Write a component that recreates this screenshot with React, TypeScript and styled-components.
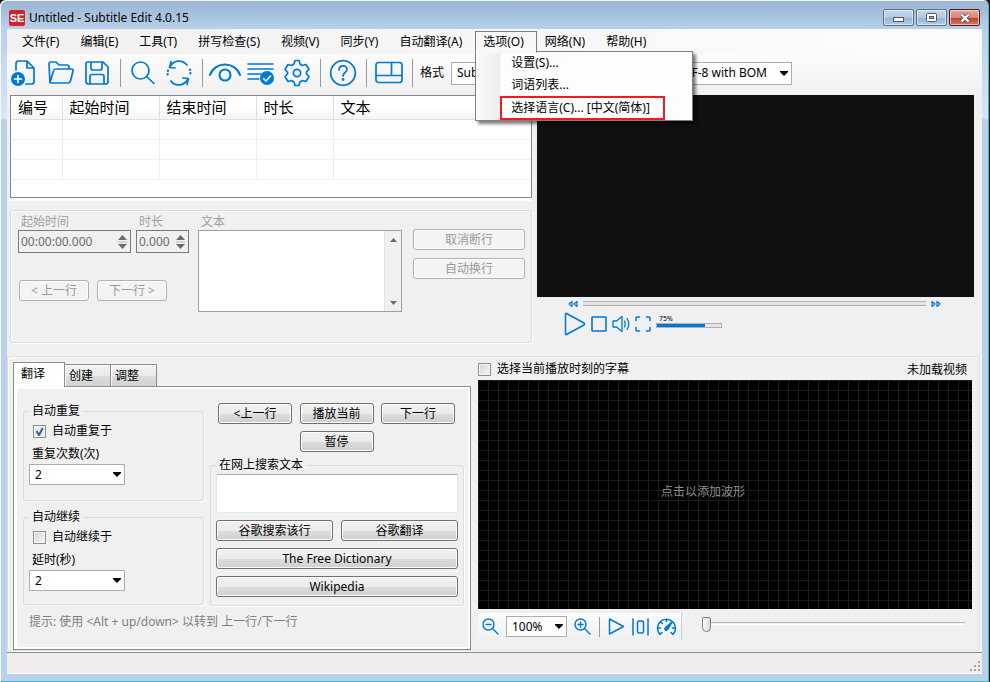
import React from "react";
import styled, { createGlobalStyle, css } from "styled-components";

const BLUE = "#0078d7";

const svgUrl = (body: string, w: number, h: number) =>
  `url("data:image/svg+xml,${encodeURIComponent(
    `<svg xmlns='http://www.w3.org/2000/svg' width='${w}' height='${h}'>${body}</svg>`
  )}")`;
const arrowDown = svgUrl("<path d='M0 0h8v1L4 5L0 1z' fill='#000'/>", 8, 5);
const tick = svgUrl(
  "<path d='M1.5 4l2.5 4L7.8 1' fill='none' stroke='#3c5aa5' stroke-width='2'/>",
  9,
  9
);

const GlobalStyle = createGlobalStyle`
  * { box-sizing: border-box; }
  body { margin: 0; background: #1a1a1a; }
  body, button, input, select, textarea {
    font-family: "Noto Sans", "Noto Sans CJK SC", sans-serif;
    font-size: 12px;
    line-height: 16px;
    color: #000;
  }
  button, fieldset, legend { margin: 0; padding: 0; }
`;

const Window = styled.div`
  display: flex;
  flex-direction: column;
  min-height: 100vh;
  padding: 0 7px 8px;
  border-right: 1px solid #111;
  border-radius: 6px 6px 0 0;
  background: linear-gradient(#98b4d2 0, #b8d0ea 29px, #d9e7f5 118px, #b9d1ea 120px);
  box-shadow: inset 1px 1px #f4f8fc, inset -1px -1px #35c0dc;
`;

const TitleBar = styled.header`
  display: flex;
  align-items: center;
  height: 29px;
  padding: 6px 2px 0 2px;
`;
const Logo = styled.span`
  width: 16px;
  height: 16px;
  border-radius: 2px;
  background: #d3222a;
  color: #fff;
  font: bold 11px/16px "Liberation Sans", sans-serif;
  text-align: center;
`;
const Title = styled.h1`
  flex: 1;
  margin: 0 0 0 4px;
  font-size: 12px;
  line-height: 16px;
  font-weight: 400;
`;
const Captions = styled.div`
  display: flex;
  gap: 2px;
`;
const CaptionButton = styled.button<{ $close?: boolean }>`
  display: grid;
  place-items: center;
  width: 31px;
  height: 17px;
  border: 1px solid #5c6e88;
  border-radius: 2px;
  background: linear-gradient(#c3d6ea 0, #b2c9e2 50%, #94b1d0 51%, #b4cde6 100%);
  box-shadow: inset 0 0 0 1px rgba(255, 255, 255, 0.5);
  ${(p) =>
    p.$close &&
    css`
      border-color: #4c1a1f;
      background: linear-gradient(#e8a79c 0, #d98678 50%, #bb3f2b 51%, #d67a63 100%);
    `}
`;

const Client = styled.main`
  flex: 1;
  display: flex;
  flex-direction: column;
  background: #f0f0f0;
`;

const MenuBar = styled.nav`
  display: flex;
  height: 25px;
  padding: 2px 7px 0;
  background: linear-gradient(90deg, #f1f1f1, #fcfcfc);
`;
const MenuSlot = styled.div`
  position: relative;
`;
const MenuButton = styled.button<{ $open?: boolean }>`
  height: 22px;
  padding: 0 12px 0 7px;
  border: 1px solid transparent;
  background: transparent;
  white-space: nowrap;
  ${(p) =>
    p.$open &&
    css`
      position: relative;
      z-index: 3;
      border-color: #808080;
      border-bottom-color: #f8f8f8;
      background: #f8f8f8;
    `}
`;
const DropDown = styled.div`
  position: absolute;
  z-index: 2;
  top: 20px;
  left: 0;
  width: 218px;
  padding: 0 27px 0 24px;
  border: 1px solid #808080;
  background: linear-gradient(90deg, #fbfbfb 0, #ededed 24px, #fdfdfd 25px);
  box-shadow: 3px 3px 3px rgba(0, 0, 0, 0.5);
`;
const DropItem = styled.button<{ $marked?: boolean }>`
  display: block;
  width: 100%;
  height: 22px;
  padding: 0 0 0 11px;
  border: 0;
  background: transparent;
  text-align: left;
  ${(p) =>
    p.$marked &&
    css`
      height: 24px;
      padding-left: 9px;
      border: 2px solid #ed1c24;
    `}
`;

const ToolBar = styled.div`
  display: flex;
  align-items: center;
  height: 41px;
  padding-bottom: 3px;
  background: linear-gradient(#fcfcfc, #f0f0f0);
`;
const ToolButton = styled.button`
  display: grid;
  place-items: center;
  flex: none;
  width: 36px;
  height: 32px;
  border: 0;
  background: transparent;
`;
const Separator = styled.i`
  flex: none;
  width: 1px;
  height: 28px;
  margin: 0 4px 0 5px;
  background: #9b9b9b;
`;
const ToolLabel = styled.label`
  margin: 0 7px 0 3px;
  white-space: nowrap;
`;
const Select = styled.select<{ $w: number }>`
  appearance: none;
  width: ${(p) => p.$w}px;
  height: 21px;
  padding: 0 16px 0 5px;
  border: 1px solid #abadb3;
  border-radius: 0;
  background: #fff ${arrowDown} no-repeat right 3px center;
`;
const ToolSelect = styled(Select)`
  height: 23px;
`;

const Upper = styled.section`
  display: grid;
  grid-template-columns: 522fr 437fr;
  gap: 5px;
  height: 261px;
  padding: 0 8px 0 3px;
`;
const Column = styled.div`
  display: flex;
  flex-direction: column;
  min-width: 0;
`;
const ListFrame = styled.div`
  height: 103px;
  margin-bottom: 12px;
  border: 1px solid #828790;
  background: #fff;
  box-shadow: 0 3px #fcfcfc;
`;
const ListTable = styled.table`
  width: 100%;
  table-layout: fixed;
  border-collapse: collapse;
  th,
  td {
    padding: 0 0 0 7px;
    border-right: 1px solid #ececec;
    border-bottom: 1px solid #f0f0f0;
  }
  th:last-child,
  td:last-child {
    border-right: 0;
  }
  th {
    height: 23px;
    font-size: 15px;
    line-height: 20px;
    font-weight: 400;
    text-align: left;
    border-color: #e0e0e0;
    background: linear-gradient(#fff 50%, #f3f4f5);
  }
  td {
    height: 20px;
  }
`;
const Col = styled.col<{ $w?: number }>`
  width: ${(p) => (p.$w ? `${p.$w}px` : "auto")};
`;

const frame = css`
  border: 1px solid #d5dfe5;
  border-radius: 3px;
  box-shadow: inset 1px 1px #fcfcfc, 1px 1px #fcfcfc;
`;
const EditGroup = styled.form`
  ${frame}
  display: grid;
  grid-template-columns: 169px 1fr 112px;
  column-gap: 11px;
  height: 133px;
  padding: 2px 6px 0 7px;
  color: #a0a0a0;
`;
const Field = styled.div`
  display: flex;
  flex-direction: column;
`;
const FieldLabel = styled.label`
  height: 17px;
  padding-left: 3px;
  line-height: 17px;
`;
const TimeRow = styled.div`
  display: flex;
  gap: 5px;
  margin-bottom: 27px;
`;
const Spinner = styled.div<{ $w: number }>`
  display: flex;
  align-items: center;
  width: ${(p) => p.$w}px;
  height: 23px;
  padding-right: 3px;
  border: 1px solid #7a7a7a;
`;
const SpinInput = styled.input`
  flex: 1;
  min-width: 0;
  padding: 0 0 0 2px;
  border: 0;
  background: transparent;
  color: #6d6d6d;
`;
const ButtonRow = styled.div`
  display: flex;
  gap: 8px;
  padding-left: 1px;
`;
const PushButton = styled.button<{ $w?: number }>`
  width: ${(p) => (p.$w ? `${p.$w}px` : "100%")};
  height: 21px;
  border: 1px solid #707070;
  border-radius: 3px;
  background: linear-gradient(#f2f2f2 0, #ebebeb 50%, #dddddd 51%, #cfcfcf 100%);
  box-shadow: inset 0 0 0 1px #fcfcfc;
  line-height: 19px;
  white-space: nowrap;
  &:disabled {
    border-color: #adb2b5;
    background: #f4f4f4;
    color: #9a9a9a;
  }
`;
const TextArea = styled.textarea`
  height: 82px;
  border: 1px solid #a5a5a5;
  padding: 2px;
  resize: none;
  background: #fff;
  outline: 0;
`;
const TextBoxFrame = styled.div`
  display: flex;
  height: 82px;
  border: 1px solid #a0a0a0;
  background: #fff;
`;
const BareText = styled(TextArea)`
  flex: 1;
  min-width: 0;
  height: 80px;
  border: 0;
`;
const ScrollTrack = styled.div`
  display: flex;
  flex-direction: column;
  align-items: center;
  justify-content: space-between;
  width: 17px;
  padding: 7px 0 6px;
  background: #f0f0f0;
  border-left: 1px solid #e3e3e3;
`;
const BreakButtons = styled.div`
  display: flex;
  flex-direction: column;
  gap: 8px;
  padding: 16px 0 0;
`;

const Video = styled.div`
  height: 202px;
  background: #111;
`;
const SeekRow = styled.div`
  display: flex;
  align-items: center;
  gap: 5px;
  height: 13px;
  padding: 0 33px 0 31px;
`;
const bar = css`
  appearance: none;
  margin: 0;
  &::-webkit-slider-thumb {
    appearance: none;
    width: 0;
    height: 0;
  }
`;
const SeekBar = styled.input`
  ${bar}
  flex: 1;
  min-width: 0;
  height: 5px;
  border-top: 1px solid #b5b5b5;
  border-bottom: 1px solid #adadad;
  background: #e4e4e4;
`;
const PlayerRow = styled.div`
  display: flex;
  align-items: center;
  gap: 5px;
  height: 28px;
  padding-left: 27px;
`;
const IconButton = styled.button`
  display: grid;
  place-items: center;
  flex: none;
  border: 0;
  background: transparent;
`;
const Volume = styled.label`
  display: flex;
  flex-direction: column;
  height: 20px;
  font-size: 7px;
  line-height: 9px;
  span {
    padding-left: 3px;
  }
`;
const VolumeBar = styled.input`
  ${bar}
  width: 66px;
  height: 5px;
  border: 1px solid #b0b0b0;
  background: linear-gradient(90deg, ${BLUE} 75%, #e6e6e6 75%);
`;

const Lower = styled.section`
  ${frame}
  flex: 1;
  display: grid;
  grid-template-columns: 458fr 494fr;
  gap: 7px;
  margin-right: 2px;
  padding: 5px 7px 0 5px;
`;
const TabStrip = styled.div`
  display: flex;
  align-items: flex-end;
  height: 24px;
`;
const Tab = styled.button<{ $active?: boolean }>`
  width: 46px;
  height: 22px;
  padding: 0 0 0 4px;
  border: 1px solid #8c8e94;
  border-bottom: 0;
  border-left-width: ${(p) => (p.$active ? 1 : 0)}px;
  background: linear-gradient(#f2f2f2 0, #ebebeb 50%, #dddddd 51%, #d3d3d3 100%);
  box-shadow: inset 1px 1px #fafafa;
  text-align: left;
  ${(p) =>
    p.$active &&
    css`
      position: relative;
      z-index: 1;
      width: 52px;
      height: 25px;
      margin-bottom: -1px;
      padding: 0 0 2px 7px;
      background: #fff;
    `}
`;
const Pane = styled.div`
  flex: 1;
  display: flex;
  flex-direction: column;
  border: 1px solid #8c8e94;
  background: #fff;
  padding: 2px 2px 2px 3px;
`;
const PaneBody = styled.div`
  flex: 1;
  padding: 14px 4px 0 6px;
  background: #f0f0f0;
`;
const PaneColumns = styled.div`
  display: grid;
  grid-template-columns: 181fr 254fr;
  gap: 6px;
`;
const Group = styled.fieldset`
  ${frame}
  box-shadow: 1px 1px #fcfcfc;
  min-width: 0;
  padding: 0 5px;
  legend {
    margin-left: 0;
    padding: 0 3px;
  }
`;
const OptionGroup = styled(Group)<{ $last?: boolean }>`
  height: ${(p) => (p.$last ? 96 : 98)}px;
  margin-bottom: 8px;
`;
const CheckRow = styled.label<{ $pad?: boolean }>`
  display: flex;
  align-items: center;
  gap: 6px;
  padding: ${(p) => (p.$pad ? "4px 0 0 4px" : "0")};
`;
const CheckBox = styled.input`
  appearance: none;
  width: 13px;
  height: 13px;
  margin: 0;
  border: 1px solid #8e8f8f;
  background: linear-gradient(135deg, #d0d4da, #f6f6f6);
  box-shadow: inset 0 0 0 1px #f4f4f4;
  &:checked {
    background: #e7ebf2 ${tick} no-repeat center;
  }
`;
const OptionLabel = styled.label`
  display: block;
  padding: 7px 0 2px 3px;
`;
const NavButtons = styled.div`
  display: grid;
  grid-template-columns: repeat(3, 74px);
  justify-content: space-between;
  row-gap: 7px;
  padding: 0 9px 5px 8px;
  > :last-child {
    grid-column: 2;
  }
`;
const SearchGroup = styled(Group)`
  height: 149px;
`;
const SearchText = styled(TextArea)`
  display: block;
  width: 100%;
  height: 39px;
  margin: 1px 0 7px;
  border-color: #abadb3 #e2e3ea #e3e9ef;
  border-radius: 2px;
`;
const SearchButtons = styled.div`
  display: grid;
  grid-template-columns: 1fr 1fr;
  gap: 7px 8px;
`;
const WideButton = styled(PushButton)`
  grid-column: 1 / -1;
`;
const Hint = styled.p`
  margin: 1px 0 0 6px;
  color: #808080;
`;

const WaveHead = styled.div`
  display: flex;
  justify-content: space-between;
  height: 18px;
  padding: 0 5px 4px 0;
`;
const Wave = styled.button`
  flex: 1;
  padding: 0 44px 6px 0;
  border: 0;
  color: #8c8c8c;
  background-color: #000;
  background-image: linear-gradient(#1b1b1b 1px, transparent 1px),
    linear-gradient(90deg, #1b1b1b 1px, transparent 1px);
  background-size: 10px 10px;
`;
const WaveFoot = styled.div`
  display: flex;
  align-items: flex-start;
  padding: 4px 7px 10px 0;
`;
const WaveTools = styled.div`
  display: flex;
  align-items: center;
  gap: 7px;
  width: 204px;
  height: 27px;
  padding: 0 4px;
  border-right: 1px solid #d0d0d0;
  background: linear-gradient(#fcfcfc, #f0f0f0);
`;
const WaveSeparator = styled(Separator)`
  height: 20px;
  margin: 0 1px;
`;
const Position = styled.input`
  appearance: none;
  flex: 1;
  min-width: 0;
  height: 16px;
  margin: 3px 0 0 20px;
  background: linear-gradient(#b5b5b5, #b5b5b5) 4px 6px / 100% 1px no-repeat,
    linear-gradient(#fdfdfd, #fdfdfd) 4px 8px / 100% 1px no-repeat;
  &::-webkit-slider-thumb {
    appearance: none;
    width: 9px;
    height: 15px;
    border: 1px solid #7c7c7c;
    border-radius: 2px 2px 5px 5px;
    background: linear-gradient(90deg, #fff, #d8d8d8);
  }
`;

const StatusBar = styled.footer`
  display: flex;
  align-items: flex-end;
  justify-content: flex-end;
  height: 22px;
  margin-top: 1px;
  padding: 0 2px 2px 0;
  border-top: 1px solid #8a8a8a;
  border-bottom: 1px solid #fdfdfd;
  background: #f1edec;
`;

type IconProps = { w: number; h: number; sw?: number; children: React.ReactNode };
const Icon = ({ w, h, sw = 1.7, children }: IconProps) => (
  <svg
    width={w}
    height={h}
    viewBox={`0 0 ${w} ${h}`}
    fill="none"
    stroke={BLUE}
    strokeWidth={sw}
    strokeLinecap="round"
    strokeLinejoin="round"
    aria-hidden="true"
  >
    {children}
  </svg>
);

const NewIcon = () => (
  <Icon w={28} h={28}>
    <path d="M5 11V4.500Q5 2 7.500 2H16L23 9V22.500Q23 25 20.500 25H15M16 2V9H23" />
    <circle cx="7" cy="20" r="7" fill={BLUE} stroke="none" />
    <path d="M3.500 20h7M7 16.500v7" stroke="#fff" />
  </Icon>
);
const OpenIcon = () => (
  <Icon w={28} h={26}>
    <path d="M3 22.500L2 4Q2 2 4 2H9L12 5H20Q22 5 22 7V9M3 22.500L6.500 11Q7 9 9 9H24.500Q26.500 9 26 11L23.500 21Q23 23 21 23H4Q3 23 3 22" />
  </Icon>
);
const SaveIcon = () => (
  <Icon w={26} h={26}>
    <path d="M4 2H19L24 7V21.500Q24 24 21.500 24H4.500Q2 24 2 21.500V4Q2 2 4 2ZM7 2V8Q7 10 9 10H16Q18 10 18 8V2M6 24V16.500Q6 14.500 8 14.500H18Q20 14.500 20 16.500V24" />
  </Icon>
);
const FindIcon = () => (
  <Icon w={26} h={26}>
    <circle cx="10.500" cy="10.500" r="8.500" />
    <path d="M17 17L24 23.500" />
  </Icon>
);
const ReplaceIcon = () => (
  <Icon w={28} h={28}>
    <path d="M5 8C8 1 17 0 22 6M6 2.500L4.500 8.500L10 9M23 20C19 27 10 28 6 22M18 19L23.500 19.500L22 25.500" />
    <path d="M25 10.500Q26 14 24.500 17M3 11.500Q2 15 3.500 18" strokeDasharray="0.500 3" strokeWidth="2.200" />
  </Icon>
);
const EyeIcon = () => (
  <Icon w={34} h={24} sw={2.1}>
    <path d="M2 14C7 0 27 0 32 14" />
    <circle cx="17" cy="14" r="5.500" />
  </Icon>
);
const ListCheckIcon = () => (
  <Icon w={28} h={26} sw={1.6}>
    <path d="M1 4H26M1 9H26M1 14H14M1 19H12" />
    <circle cx="20" cy="18" r="7" fill={BLUE} stroke="none" />
    <path d="M16.500 18.500L19 21L23.500 16" stroke="#fff" />
  </Icon>
);
const GearIcon = () => (
  <Icon w={28} h={28}>
    <path d="M11 5L12 1.500H16L17 5L19.500 6.500L23 5.500L26 10.500L23.500 13V15L26 17.500L23 22.500L19.500 21.500L17 23L16 26.500H12L11 23L8.500 21.500L5 22.500L2 17.500L4.500 15V13L2 10.500L5 5.500L8.500 6.500Z" />
    <circle cx="14" cy="14" r="3.600" />
  </Icon>
);
const HelpIcon = () => (
  <Icon w={28} h={28}>
    <circle cx="14" cy="14" r="12.300" />
    <path d="M10 11C10 5.500 18 5.500 18 10.500C18 13.500 14 13.500 14 17" />
    <circle cx="14" cy="20.500" r="0.600" />
  </Icon>
);
const LayoutIcon = () => (
  <Icon w={28} h={24}>
    <rect x="1" y="1.500" width="26" height="20" rx="2.500" />
    <path d="M1 14.500H27M16.500 1.500V14.500" />
  </Icon>
);
const SpinArrows = () => (
  <svg width="9" height="14" viewBox="0 0 9 14" fill="#6d6d6d" aria-hidden="true">
    <path d="M4.500 0L9 5H0ZM0 9H9L4.500 14Z" />
    <path d="M0 7H9" stroke="#bbb" />
  </svg>
);
const ZoomIcon = ({ plus }: { plus?: boolean }) => (
  <Icon w={17} h={17} sw={1.4}>
    <circle cx="6.500" cy="6.500" r="5.500" />
    <path d={plus ? "M10.500 10.500L16 16M4 6.500H9M6.500 4V9" : "M10.500 10.500L16 16M4 6.500H9"} />
  </Icon>
);

const Check = ({ text, pad, checked }: { text: string; pad?: boolean; checked?: boolean }) => (
  <CheckRow $pad={pad}>
    <CheckBox type="checkbox" defaultChecked={checked} />
    {text}
  </CheckRow>
);

const toolGroups: [string, () => React.JSX.Element][][] = [
  [["新建", NewIcon], ["打开", OpenIcon], ["保存", SaveIcon]],
  [["查找", FindIcon], ["替换", ReplaceIcon]],
  [["视觉同步", EyeIcon], ["拼写检查", ListCheckIcon], ["设置", GearIcon]],
  [["帮助", HelpIcon]],
  [["布局", LayoutIcon]],
];
const menus = [
  "文件(F)", "编辑(E)", "工具(T)", "拼写检查(S)", "视频(V)",
  "同步(Y)", "自动翻译(A)", "选项(O)", "网络(N)", "帮助(H)",
];

export default function App() {
  return (
    <Window>
      <GlobalStyle />
      <TitleBar>
        <Logo>SE</Logo>
        <Title>Untitled - Subtitle Edit 4.0.15</Title>
        <Captions>
          <CaptionButton aria-label="最小化">
            <svg width="11" height="9">
              <rect x="0.500" y="4.500" width="10" height="4" fill="#fff" stroke="#535666" />
            </svg>
          </CaptionButton>
          <CaptionButton aria-label="最大化">
            <svg width="11" height="9">
              <rect x="0.500" y="0.500" width="10" height="8" rx="1" fill="#fff" stroke="#535666" />
              <rect x="3.500" y="3.500" width="4" height="2" fill="#9ab5d3" stroke="#535666" />
            </svg>
          </CaptionButton>
          <CaptionButton $close aria-label="关闭">
            <svg width="12" height="10" fill="none">
              <path d="M2.500 1.500L9.500 8.500M9.500 1.500L2.500 8.500" stroke="#535666" strokeWidth="4" />
              <path d="M2.500 1.500L9.500 8.500M9.500 1.500L2.500 8.500" stroke="#fff" strokeWidth="2.200" />
            </svg>
          </CaptionButton>
        </Captions>
      </TitleBar>

      <Client>
        <MenuBar>
          {menus.map((name) => {
            const open = name === "选项(O)";
            return (
              <MenuSlot key={name}>
                <MenuButton $open={open}>{name}</MenuButton>
                {open && (
                  <DropDown>
                    <DropItem>设置(S)...</DropItem>
                    <DropItem>词语列表...</DropItem>
                    <DropItem $marked>选择语言(C)... [中文(简体)]</DropItem>
                  </DropDown>
                )}
              </MenuSlot>
            );
          })}
        </MenuBar>

        <ToolBar>
          {toolGroups.map((group, i) => (
            <React.Fragment key={i}>
              {group.map(([label, Glyph]) => (
                <ToolButton key={label} aria-label={label}>
                  <Glyph />
                </ToolButton>
              ))}
              <Separator />
            </React.Fragment>
          ))}
          <ToolLabel htmlFor="format">格式</ToolLabel>
          <ToolSelect id="format" $w={185}>
            <option>SubRip (.srt)</option>
          </ToolSelect>
          <ToolLabel htmlFor="encoding">编码</ToolLabel>
          <ToolSelect id="encoding" $w={122}>
            <option>UTF-8 with BOM</option>
          </ToolSelect>
        </ToolBar>

        <Upper>
          <Column>
            <ListFrame>
              <ListTable>
                <colgroup>
                  <Col $w={51} />
                  <Col $w={97} />
                  <Col $w={97} />
                  <Col $w={77} />
                  <Col />
                </colgroup>
                <thead>
                  <tr>
                    {["编号", "起始时间", "结束时间", "时长", "文本"].map((h) => (
                      <th key={h}>{h}</th>
                    ))}
                  </tr>
                </thead>
                <tbody>
                  {[0, 1, 2].map((r) => (
                    <tr key={r}>
                      {[0, 1, 2, 3, 4].map((c) => (
                        <td key={c} />
                      ))}
                    </tr>
                  ))}
                </tbody>
              </ListTable>
            </ListFrame>

            <EditGroup>
              <Field>
                <TimeRow>
                  <Field>
                    <FieldLabel htmlFor="start">起始时间</FieldLabel>
                    <Spinner $w={113}>
                      <SpinInput id="start" defaultValue="00:00:00.000" disabled />
                      <SpinArrows />
                    </Spinner>
                  </Field>
                  <Field>
                    <FieldLabel htmlFor="duration">时长</FieldLabel>
                    <Spinner $w={53}>
                      <SpinInput id="duration" defaultValue="0.000" disabled />
                      <SpinArrows />
                    </Spinner>
                  </Field>
                </TimeRow>
                <ButtonRow>
                  <PushButton $w={70} disabled>&lt; 上一行</PushButton>
                  <PushButton $w={70} disabled>下一行 &gt;</PushButton>
                </ButtonRow>
              </Field>
              <Field>
                <FieldLabel htmlFor="text">文本</FieldLabel>
                <TextBoxFrame>
                  <BareText id="text" disabled />
                  <ScrollTrack>
                    <svg width="7" height="4" fill="#6a6a6a"><path d="M0 4L3.500 0L7 4Z" /></svg>
                    <svg width="7" height="4" fill="#6a6a6a"><path d="M0 0L3.500 4L7 0Z" /></svg>
                  </ScrollTrack>
                </TextBoxFrame>
              </Field>
              <BreakButtons>
                <PushButton disabled>取消断行</PushButton>
                <PushButton disabled>自动换行</PushButton>
              </BreakButtons>
            </EditGroup>
          </Column>

          <Column>
            <Video />
            <SeekRow>
              <IconButton aria-label="后退">
                <Icon w={10} h={8} sw={1.2}>
                  <path d="M4 1.500V6.500L1 4ZM9 1.500V6.500L6 4Z" />
                </Icon>
              </IconButton>
              <SeekBar type="range" defaultValue={0} aria-label="进度" />
              <IconButton aria-label="前进">
                <Icon w={10} h={8} sw={1.2}>
                  <path d="M1 1.500V6.500L4 4ZM6 1.500V6.500L9 4Z" />
                </Icon>
              </IconButton>
            </SeekRow>
            <PlayerRow>
              <IconButton aria-label="播放">
                <Icon w={22} h={24} sw={1.5}>
                  <path d="M1.500 2Q1.500 1 2.500 1.500L20 11Q21 12 20 13L2.500 22.500Q1.500 23 1.500 22Z" />
                </Icon>
              </IconButton>
              <IconButton aria-label="停止">
                <Icon w={16} h={16} sw={1.6}>
                  <rect x="1" y="1" width="14" height="14" rx="0.500" />
                </Icon>
              </IconButton>
              <IconButton aria-label="静音">
                <Icon w={18} h={18} sw={1.3}>
                  <path d="M1 6H4.500L10 1.500V16.500L4.500 12H1ZM12.500 6Q14 9 12.500 12M15 3.500Q18.500 9 15 14.500" />
                </Icon>
              </IconButton>
              <IconButton aria-label="全屏">
                <Icon w={16} h={16} sw={1.5}>
                  <path d="M1 4.500V2Q1 1 2 1H4.500M11.500 1H14Q15 1 15 2V4.500M15 11.500V14Q15 15 14 15H11.500M4.500 15H2Q1 15 1 14V11.500" />
                </Icon>
              </IconButton>
              <Volume>
                <span>75%</span>
                <VolumeBar type="range" defaultValue={75} />
              </Volume>
            </PlayerRow>
          </Column>
        </Upper>

        <Lower>
          <Column>
            <TabStrip role="tablist">
              <Tab $active role="tab" aria-selected="true">翻译</Tab>
              <Tab role="tab" aria-selected="false">创建</Tab>
              <Tab role="tab" aria-selected="false">调整</Tab>
            </TabStrip>
            <Pane role="tabpanel">
              <PaneBody>
                <PaneColumns>
                  <div>
                    <OptionGroup>
                      <legend>自动重复</legend>
                      <Check pad checked text="自动重复于" />
                      <OptionLabel htmlFor="repeat">重复次数(次)</OptionLabel>
                      <Select id="repeat" $w={96}>
                        <option>2</option>
                      </Select>
                    </OptionGroup>
                    <OptionGroup $last>
                      <legend>自动继续</legend>
                      <Check pad text="自动继续于" />
                      <OptionLabel htmlFor="delay">延时(秒)</OptionLabel>
                      <Select id="delay" $w={96}>
                        <option>2</option>
                      </Select>
                    </OptionGroup>
                  </div>
                  <div>
                    <NavButtons>
                      <PushButton>&lt;上一行</PushButton>
                      <PushButton>播放当前</PushButton>
                      <PushButton>下一行</PushButton>
                      <PushButton>暂停</PushButton>
                    </NavButtons>
                    <SearchGroup>
                      <legend>在网上搜索文本</legend>
                      <SearchText aria-label="在网上搜索文本" />
                      <SearchButtons>
                        <PushButton>谷歌搜索该行</PushButton>
                        <PushButton>谷歌翻译</PushButton>
                        <WideButton>The Free Dictionary</WideButton>
                        <WideButton>Wikipedia</WideButton>
                      </SearchButtons>
                    </SearchGroup>
                  </div>
                </PaneColumns>
                <Hint>提示: 使用 &lt;Alt + up/down&gt; 以转到 上一行/下一行</Hint>
              </PaneBody>
            </Pane>
          </Column>

          <Column>
            <WaveHead>
              <Check text="选择当前播放时刻的字幕" />
              <span>未加载视频</span>
            </WaveHead>
            <Wave>点击以添加波形</Wave>
            <WaveFoot>
              <WaveTools>
                <IconButton aria-label="缩小"><ZoomIcon /></IconButton>
                <Select $w={61} aria-label="缩放">
                  <option>100%</option>
                </Select>
                <IconButton aria-label="放大"><ZoomIcon plus /></IconButton>
                <WaveSeparator />
                <IconButton aria-label="播放">
                  <Icon w={17} h={17} sw={1.5}>
                    <path d="M1.500 1L15.500 8.500L1.500 16Z" />
                  </Icon>
                </IconButton>
                <IconButton aria-label="居中">
                  <Icon w={17} h={18} sw={1.5}>
                    <path d="M1 1V17M16 1V17" />
                    <rect x="5.500" y="3" width="6" height="12" rx="1.500" />
                  </Icon>
                </IconButton>
                <IconButton aria-label="播放速度">
                  <Icon w={21} h={20} sw={1.5}>
                    <path d="M4 17.500A9 9 0 1 1 17 17.500M2 11H4.500M4.500 5L6.500 6.500M10.500 2V4.500M19 11H16.500M4 17.500L6 15.500M17 17.500L15 15.500" />
                    <path d="M16 5L11.500 12.500Q10 14 9 12.500Q8.500 11.500 9.500 10.500Z" fill={BLUE} />
                  </Icon>
                </IconButton>
              </WaveTools>
              <Position type="range" defaultValue={0} aria-label="位置" />
            </WaveFoot>
          </Column>
        </Lower>

        <StatusBar>
          <svg width="10" height="10" fill="#a8a4a3" aria-hidden="true">
            <path d="M8 0h2v2H8zM4 4h2v2H4zM8 4h2v2H8zM0 8h2v2H0zM4 8h2v2H4zM8 8h2v2H8z" />
          </svg>
        </StatusBar>
      </Client>
    </Window>
  );
}
